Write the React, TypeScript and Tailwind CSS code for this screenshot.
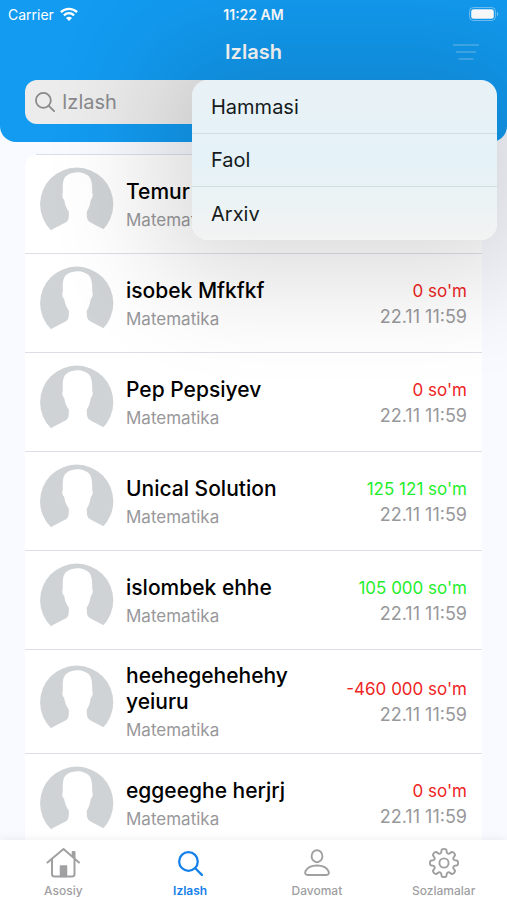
import React from "react";

type Student = {
  name: string;
  subject: string;
  amount?: string;
  tone?: "debt" | "paid";
  date?: string;
};

const students: Student[] = [
  { name: "Temur", subject: "Matematika" },
  { name: "isobek Mfkfkf", subject: "Matematika", amount: "0 so'm", tone: "debt", date: "22.11 11:59" },
  { name: "Pep Pepsiyev", subject: "Matematika", amount: "0 so'm", tone: "debt", date: "22.11 11:59" },
  { name: "Unical Solution", subject: "Matematika", amount: "125 121 so'm", tone: "paid", date: "22.11 11:59" },
  { name: "islombek ehhe", subject: "Matematika", amount: "105 000 so'm", tone: "paid", date: "22.11 11:59" },
  { name: "heehegehehehy yeiuru", subject: "Matematika", amount: "-460 000 so'm", tone: "debt", date: "22.11 11:59" },
  { name: "eggeeghe herjrj", subject: "Matematika", amount: "0 so'm", tone: "debt", date: "22.11 11:59" },
];

function Avatar() {
  return (
    <svg viewBox="0 0 74 74" className="size-[74px] shrink-0" aria-hidden="true">
      <circle cx="36.700" cy="37.200" r="36.600" fill="#cfd3d6" />
      <path
        fill="#fff"
        d="M12 62.500L24.500 56C28.500 54 29 52 28.800 44.500C26.500 41.500 25 38 24.200 33C22.500 32 21.600 27.500 22.800 26C22.500 16 23 10.500 27.500 8C32 4.900 41 4.300 45 7C50.500 8.500 52.700 14 52.200 26C53.400 27.500 52.500 32 50.800 33C50 38 48.800 41.500 46.800 44.500C46.600 52 47.500 54 51.500 56L64 62.500L70 75H4Z"
      />
    </svg>
  );
}

function WifiIcon() {
  return (
    <svg viewBox="0 0 18 14" className="h-[14px] w-[18px]" aria-hidden="true">
      <g fill="none" stroke="#fff" strokeWidth="2.300">
        <path d="M0.900 5.200C5.500 0.800 12.500 0.800 17.100 5.200" />
        <path d="M3.900 8.300C6.900 5.500 11.100 5.500 14.100 8.300" />
      </g>
      <path fill="#fff" d="M9 14L6 10.900C7.700 9.400 10.300 9.400 12 10.900Z" />
    </svg>
  );
}

function BatteryIcon() {
  return (
    <svg viewBox="0 0 30 14" className="h-[14px] w-[30px]" aria-hidden="true">
      <rect x="0.500" y="0.500" width="26" height="13" rx="4" fill="none" stroke="#fff" strokeOpacity="0.400" />
      <rect x="2.200" y="2.200" width="22.600" height="9.600" rx="2.500" fill="#fff" />
      <path d="M28 5v4c1.600-.6 1.600-3.400 0-4Z" fill="#fff" fillOpacity="0.500" />
    </svg>
  );
}

function Glass({ className }: { className: string }) {
  return (
    <svg viewBox="0 0 22 22" className={className} fill="none" stroke="currentColor" strokeWidth="2" strokeLinecap="round" aria-hidden="true">
      <circle cx="9.200" cy="9.200" r="8.200" />
      <path d="M15.200 15.200L21 21" />
    </svg>
  );
}

function HomeIcon() {
  return (
    <svg viewBox="0 0 34 32" className="h-8 w-[34px]" fill="none" stroke="currentColor" strokeWidth="2" strokeLinecap="round" strokeLinejoin="round" aria-hidden="true">
      <path d="M1.500 15.500L17.500 2L33 15.500" />
      <path d="M6 12.500V27Q6 29.500 8.500 29.500H26Q28.500 29.500 28.500 27V12.500" />
      <path d="M26.700 9V5H28.500V11" />
      <path d="M14.500 29.500V19H20.500V29.500Z" fill="currentColor" strokeWidth="1.500" />
    </svg>
  );
}

function PersonIcon() {
  return (
    <svg viewBox="0 0 26 28" className="h-7 w-[26px]" fill="none" stroke="currentColor" strokeWidth="1.900" strokeLinejoin="round" aria-hidden="true">
      <ellipse cx="13" cy="7.200" rx="5.400" ry="6" />
      <path d="M3.400 26C0.800 26 0.900 23.600 1.600 22C3.200 18.700 7.400 16.500 13 16.500S22.800 18.700 24.400 22C25.100 23.600 25.200 26 22.600 26Z" />
    </svg>
  );
}

function GearIcon() {
  const teeth = Array.from({ length: 8 }, (_, i) => {
    const base = (i * Math.PI) / 4 - Math.PI / 2;
    const at = (r: number, offset: number) =>
      `${(16 + r * Math.cos(base + offset)).toFixed(2)} ${(16 + r * Math.sin(base + offset)).toFixed(2)}`;
    return `${i === 0 ? "M" : "L"}${at(10.8, -0.27)}L${at(13.6, -0.17)}Q${at(14.9, 0)} ${at(13.6, 0.17)}L${at(10.8, 0.27)}Q${at(9.6, 0.39)} ${at(10.8, 0.515)}`;
  }).join("");
  return (
    <svg viewBox="0 0 32 32" className="size-8" fill="none" stroke="currentColor" strokeWidth="1.900" strokeLinejoin="round" aria-hidden="true">
      <path d={`${teeth}Z`} />
      <circle cx="16" cy="16" r="4.600" />
    </svg>
  );
}

function Header() {
  return (
    <header className="relative z-10 h-[142px] shrink-0 rounded-b-[16px] bg-[#129bf1] text-white">
      <div className="grid h-7 grid-cols-3 items-center px-2 text-[14px]">
        <div className="flex items-center gap-[6px]">
          Carrier <WifiIcon />
        </div>
        <div className="text-center font-semibold">11:22 AM</div>
        <div className="flex justify-end">
          <BatteryIcon />
        </div>
      </div>
      <div className="grid h-[52px] grid-cols-3 items-center px-7 pb-1">
        <h1 className="col-start-2 text-center text-[20px] leading-6 font-semibold">Izlash</h1>
        <button type="button" aria-label="Filtr" className="justify-self-end text-white/20">
          <svg viewBox="0 0 26 18" className="h-[18px] w-[26px]" stroke="currentColor" strokeWidth="2" aria-hidden="true">
            <path d="M0 2H26M3 9H23M5.500 16H20.500" />
          </svg>
        </button>
      </div>
      <label className="mx-[25px] flex h-11 items-center gap-[7px] rounded-[12px] bg-[#ececec] pl-[10px] text-[#8a8a8c]">
        <Glass className="size-5 shrink-0" />
        <input
          type="search"
          aria-label="Izlash"
          placeholder="Izlash"
          className="min-w-0 flex-1 bg-transparent text-[20px] outline-none placeholder:text-[#8a8a8c]"
        />
      </label>
      <div
        role="menu"
        className="absolute top-20 right-[10px] w-[305px] divide-y divide-[#cfdde3] overflow-hidden rounded-[16px] bg-linear-to-b from-[#e8f1f6] via-[#e5f2f7] to-[#f2f3f2] text-[20px] text-[#151a1c] shadow-[0_0_110px_40px_rgba(0,0,0,0.14)]"
      >
        {["Hammasi", "Faol", "Arxiv"].map((item) => (
          <button key={item} type="button" role="menuitem" className="block h-[53px] w-full px-[19px] text-left first:h-[54px]">
            {item}
          </button>
        ))}
      </div>
    </header>
  );
}

function StudentRow({ student }: { student: Student }) {
  return (
    <li className="flex items-center gap-3 border-b border-[#dcdeea] bg-white py-3 pr-[15px] pl-[15px]">
      <Avatar />
      <div className="min-w-0 flex-1 pt-px">
        <h2 className="text-[21px] leading-[26px] font-medium text-black">{student.name}</h2>
        <p className="mt-1 text-[17px] leading-[22px] text-[#98989b]">{student.subject}</p>
      </div>
      {student.amount && (
        <div className="pt-px text-right text-[17px] leading-[26px]">
          <p className={student.tone === "paid" ? "text-[#1fee2c]" : "text-[#ee2424]"}>{student.amount}</p>
          <p className="text-[18px] text-[#98989b]">{student.date}</p>
        </div>
      )}
    </li>
  );
}

function Tab({ label, active, children }: { label: string; active?: boolean; children: React.ReactNode }) {
  return (
    <a
      href="#"
      className={`flex flex-1 flex-col items-center text-[12px] leading-4 ${active ? "font-semibold text-[#1680ea]" : "font-medium text-[#a0a0a2]"}`}
    >
      <span className="flex h-[43px] items-center pt-[3px]">{children}</span>
      {label}
    </a>
  );
}

export default function App() {
  return (
    <div className="flex h-dvh flex-col overflow-hidden bg-[#f8faff] font-['Inter','Liberation_Sans',sans-serif]">
      <Header />
      <main className="min-h-0 flex-1 overflow-hidden px-[25px] pt-3">
        <div className="mx-[11px] border-t border-[#dcdeea]" />
        <ul className="overflow-hidden rounded-t-[12px]">
          {students.map((student) => (
            <StudentRow key={student.name} student={student} />
          ))}
        </ul>
      </main>
      <nav className="z-20 flex h-[60px] shrink-0 bg-white shadow-[0_0_10px_rgba(0,0,0,0.08)]">
        <Tab label="Asosiy">
          <HomeIcon />
        </Tab>
        <Tab label="Izlash" active>
          <Glass className="size-[25px]" />
        </Tab>
        <Tab label="Davomat">
          <PersonIcon />
        </Tab>
        <Tab label="Sozlamalar">
          <GearIcon />
        </Tab>
      </nav>
    </div>
  );
}
